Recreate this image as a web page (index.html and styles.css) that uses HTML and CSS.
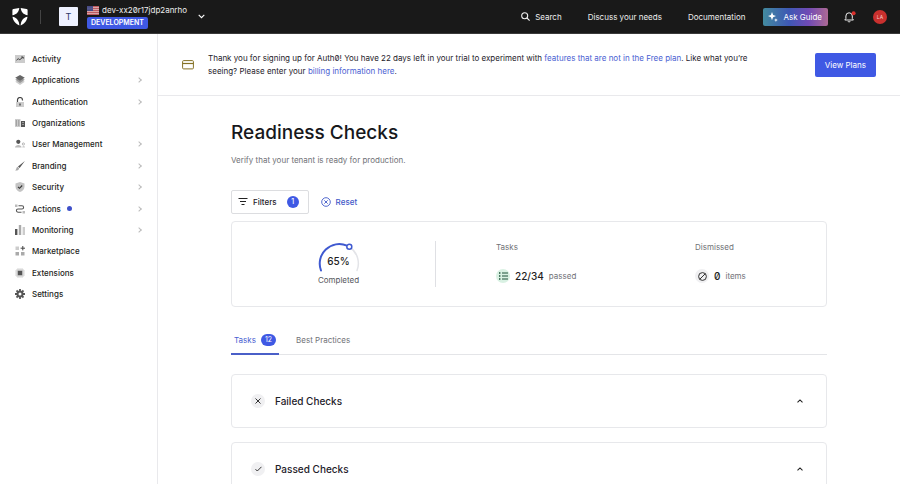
FILE: index.html
```html
<!DOCTYPE html>
<html lang="en">
<head>
<meta charset="utf-8">
<meta name="viewport" content="width=device-width, initial-scale=1">
<title>Readiness Checks</title>
<link rel="stylesheet" href="styles.css">
</head>
<body>
<header class="topbar">
  <a class="logo" href="#" aria-label="Home">
    <svg width="16" height="18" viewBox="0 0 16 18" fill="#fff"><path d="M7.3 0C7 3.600 4.600 6.600.4 7.300V2.200C.4 1.600.8 1.200 1.400 1.100Z"/><path d="M8.700 0C9 3.600 11.400 6.600 15.600 7.300V2.200C15.600 1.600 15.200 1.200 14.600 1.100Z"/><path d="M.5 8.700C4.600 9.300 7 12.400 7.400 17.500 3.600 15.800.9 12.600.5 8.700Z"/><path d="M15.500 8.700C11.400 9.300 9 12.400 8.600 17.500 12.400 15.800 15.100 12.600 15.500 8.700Z"/></svg>
  </a>
  <span class="divider"></span>
  <button class="tenant" type="button">
    <span class="tenant-tile">T</span>
    <span class="tenant-info">
      <span class="tenant-name">
        <svg width="12" height="9" viewBox="0 0 12 9"><path fill="#d9a5a8" d="M0 0h12v9H0z"/><path stroke="#bd5a60" d="M0 .5h12M0 2.500h12M0 4.500h12M0 6.500h12M0 8.500h12"/><path fill="#41457f" d="M0 0h6v5H0z"/><path stroke="#8f93bd" stroke-dasharray="1 1" stroke-width=".5" d="M.5 1.200h5M.5 2.500h5M.5 3.800h5"/></svg>
        dev-xx20r17jdp2anrho
      </span>
      <span class="env">DEVELOPMENT</span>
    </span>
    <svg width="7" height="5" viewBox="0 0 7 5" fill="none" stroke="#fff" stroke-width="1.100"><path d="M.7.800 3.500 3.600 6.300.8"/></svg>
  </button>
  <nav class="toplinks" aria-label="Tools">
    <a href="#"><svg width="9" height="9" viewBox="0 0 9 9" fill="none" stroke="#eee" stroke-width="1.100"><circle cx="3.700" cy="3.700" r="3"/><path d="m6 6 2.600 2.600"/></svg>Search</a>
    <a href="#">Discuss your needs</a>
    <a href="#">Documentation</a>
  </nav>
  <button class="guide" type="button"><svg width="10" height="10" viewBox="0 0 10 10" fill="#fff"><path d="M4 0 5.100 3 8 4.100 5.100 5.200 4 8.200 2.900 5.200 0 4.100 2.900 3ZM7.900 6.200l.6 1.300 1.300.6-1.300.5-.6 1.400-.5-1.400L6 8.100l1.400-.6Z"/></svg>Ask Guide</button>
  <button class="bell" type="button" aria-label="Notifications"><svg width="13" height="12" viewBox="0 0 13 12" fill="none"><path stroke="#eee" stroke-linejoin="round" d="M.8 9h8.600L8.300 7.500V5A3.200 3.200 0 0 0 1.900 5v2.500Z"/><path stroke="#eee" d="M3.800 10.200c.3.900 2.300.9 2.600 0"/><circle cx="9.600" cy="2.200" r="2" fill="#d9302c"/></svg></button>
  <button class="avatar" type="button">LA</button>
</header>
<div class="shell">
  <nav class="sidebar" aria-label="Main">
    <ul>
      <li><a href="#"><svg viewBox="0 0 10 10" fill="none"><path fill="#ccc" d="M0 1h10v8H0z"/><path stroke="#444" d="m1.500 6.200 1.700-1.500 1.600 1 3-2.500M6.200 3h2v1.700"/></svg>Activity</a></li>
      <li><a href="#"><svg viewBox="0 0 10 10"><path fill="#ccc" d="m5 4.200 4.800 2.500L5 10 .2 6.700Z"/><path fill="#999" d="m5 2.400 4.800 2.400L5 8 .2 4.800Z"/><path fill="#666" d="m5 0 4.800 2.800L5 5.800.2 2.800Z"/></svg>Applications<i class="more"></i></a></li>
      <li><a href="#"><svg viewBox="0 0 10 10" fill="none"><path fill="#ccc" d="M1 5h8v5H1z"/><path stroke="#444" stroke-width="1.200" d="M2.500 5V3a2.500 2.500 0 0 1 5 0v.6"/><path fill="#333" d="M4.400 6.500h1.200v2H4.400z"/></svg>Authentication<i class="more"></i></a></li>
      <li><a href="#"><svg viewBox="0 0 10 10"><path fill="#ccc" d="M0 1h5.500v8H0z"/><path fill="#555" d="M6 3h4v6H6z"/><path stroke="#666" stroke-dasharray="1 1" d="M1.300 2.500v5M3.800 2.500v5"/><path stroke="#ddd" stroke-dasharray="1 1" d="M8 4v4"/></svg>Organizations</a></li>
      <li><a href="#"><svg viewBox="0 0 10 10"><circle cx="3.300" cy="2.800" r="2.100" fill="#555"/><path fill="#bbb" d="M0 8.500C0 5 6.600 5 6.600 8.500Z"/><circle cx="8.400" cy="5" r="1.100" fill="none" stroke="#999" stroke-width=".7"/><path fill="#ccc" d="M7.200 8.500c0-2 2.800-2 2.800 0Z"/></svg>User Management<i class="more"></i></a></li>
      <li><a href="#"><svg viewBox="0 0 10 10"><path fill="#555" d="M9.900.1 4.600 7 3 5.400Z"/><path fill="#aaa" d="M2.600 5.800 4.200 7.400C3.600 9.500 1.500 9.700.1 9.500 1.500 8.700.9 6.700 2.600 5.800Z"/></svg>Branding<i class="more"></i></a></li>
      <li><a href="#"><svg viewBox="0 0 10 10" fill="none"><path fill="#c4c4c4" d="m5 0 4.500 1.500v3C9.500 7.300 7.500 9.200 5 10 2.500 9.200.5 7.300.5 4.500v-3Z"/><path stroke="#333" stroke-width="1.100" d="m3 4.800 1.500 1.500L7.200 3.500"/></svg>Security<i class="more"></i></a></li>
      <li><a href="#"><svg viewBox="0 0 10 10" fill="none"><path fill="#bbb" d="M0 .5h2.500V3H0zM7.500 7H10v2.500H7.500z"/><path stroke="#555" stroke-width="1.100" d="M3.500 1.800H7a1.600 1.600 0 0 1 0 3.200H3a1.600 1.600 0 0 0 0 3.200h3.500"/></svg>Actions<b class="dot"></b><i class="more"></i></a></li>
      <li><a href="#"><svg viewBox="0 0 10 10"><path fill="#555" d="M0 4h2.400v6H0z"/><path fill="#aaa" d="M3.800 0h2.400v10H3.800z"/><path fill="#ccc" d="M7.600 2H10v8H7.600z"/></svg>Monitoring<i class="more"></i></a></li>
      <li><a href="#"><svg viewBox="0 0 10 10"><path fill="#ccc" d="M.5.500h3.500V4H.5z"/><path fill="#aaa" d="M.5 6H4v3.500H.5zM6 6h3.500v3.500H6z"/><path stroke="#444" d="M7.800 0v4.400M5.600 2.200H10"/></svg>Marketplace</a></li>
      <li><a href="#"><svg viewBox="0 0 10 10"><path fill="#ddd" d="M1.200 1.200h7.600v7.600H1.200z"/><path stroke="#ccc" stroke-width=".8" d="M3 0v10M5 0v10M7 0v10M0 3h10M0 5h10M0 7h10"/><path fill="#555" d="M2.800 2.800h4.400v4.400H2.800z"/></svg>Extensions</a></li>
      <li><a href="#"><svg viewBox="0 0 10 10" fill="none" stroke="#555"><circle cx="5" cy="5" r="2.500" stroke-width="2"/><path stroke-width="1.800" d="M5 0v2M5 8v2M0 5h2M8 5h2M1.500 1.500l1.400 1.400M7.100 7.100l1.400 1.400M1.500 8.500l1.400-1.400M7.100 2.900l1.400-1.400"/></svg>Settings</a></li>
    </ul>
  </nav>
  <div class="page">
    <aside class="banner">
      <svg width="12" height="10" viewBox="0 0 12 10" fill="none" stroke="#857126"><rect x=".6" y=".6" width="10.800" height="8.300" rx="1"/><path stroke-width="1.200" d="M.6 3.500h10.800"/></svg>
      <p>Thank you for signing up for Auth0! You have 22 days left in your trial to experiment with <a href="#">features that are not in the Free plan</a>. Like what you’re seeing? Please enter your <a href="#">billing information here</a>.</p>
      <button class="plans" type="button">View Plans</button>
    </aside>
    <main class="content">
      <h1>Readiness Checks</h1>
      <p class="lead">Verify that your tenant is ready for production.</p>
      <div class="toolbar">
        <button class="filters" type="button"><svg width="10" height="8" viewBox="0 0 10 8" stroke="#222"><path d="M.5.500h9M2 3.500h6M3.500 6.500h3"/></svg>Filters<span class="count">1</span></button>
        <button class="reset" type="button"><svg width="10" height="10" viewBox="0 0 10 10" fill="none" stroke="#3f59c8" stroke-width=".9"><circle cx="5" cy="5" r="4.300"/><path d="m3.300 3.300 3.400 3.400M6.700 3.300 3.300 6.700"/></svg>Reset</button>
      </div>
      <section class="summary">
        <div class="progress">
          <div class="gauge">
            <svg width="42" height="31" viewBox="0 0 42 31" fill="none" stroke-linecap="round"><path stroke="#e3e4e8" stroke-width="1.500" d="M31.500 5A19.500 19.500 0 0 1 39 28.500"/><path stroke="#3f59d0" stroke-width="2" d="M3 28.500A19.500 19.500 0 0 1 29 3.700"/><circle cx="31.300" cy="4.800" r="2.500" fill="#fff" stroke="#3f59d0" stroke-width="1.500"/></svg>
            <strong>65%</strong>
          </div>
          <span>Completed</span>
        </div>
        <div class="stat">
          <h2>Tasks</h2>
          <p><span class="badge green"><svg width="9" height="8" viewBox="0 0 9 8" stroke="#1d5138"><path stroke-width="1.300" d="M0 1h1.400M0 4h1.400M0 7h1.400"/><path d="M3 1h6M3 4h6M3 7h6"/></svg></span><strong>22/34</strong>passed</p>
        </div>
        <div class="stat">
          <h2>Dismissed</h2>
          <p><span class="badge"><svg width="9" height="9" viewBox="0 0 9 9" fill="none" stroke="#333"><circle cx="4.500" cy="4.500" r="3.900"/><path d="m1.800 7.200 5.400-5.400"/></svg></span><strong>0</strong>items</p>
        </div>
      </section>
      <div class="tabs" role="tablist">
        <button class="tab active" type="button" role="tab" aria-selected="true">Tasks<span class="count">12</span></button>
        <button class="tab" type="button" role="tab" aria-selected="false">Best Practices</button>
      </div>
      <button class="check" type="button"><span class="badge"><svg width="6" height="6" viewBox="0 0 6 6" stroke="#333"><path d="m.5.500 5 5M5.500.500l-5 5"/></svg></span>Failed Checks<svg class="caret" width="6" height="4" viewBox="0 0 6 4" fill="none" stroke="#222" stroke-width="1.100"><path d="M.5 3.300 3 .900l2.500 2.400"/></svg></button>
      <button class="check" type="button"><span class="badge"><svg width="7" height="6" viewBox="0 0 7 6" fill="none" stroke="#333"><path d="m.5 3.200 1.800 1.800L6.500.800"/></svg></span>Passed Checks<svg class="caret" width="6" height="4" viewBox="0 0 6 4" fill="none" stroke="#222" stroke-width="1.100"><path d="M.5 3.300 3 .900l2.500 2.400"/></svg></button>
    </main>
  </div>
</div>
</body>
</html>
```
FILE: styles.css
```css
* { box-sizing: border-box; }
body {
  margin: 0;
  height: 100vh;
  overflow: hidden;
  display: flex;
  flex-direction: column;
  background: #fff;
  color: #1e212a;
  font: 8px/14px Inter, "Liberation Sans", sans-serif;
  font-feature-settings: "zero";
}
h1, h2, p, ul { margin: 0; padding: 0; font-weight: 400; }
button { font: inherit; font-feature-settings: inherit; color: inherit; background: none; border: 0; padding: 0; cursor: pointer; }
a { color: #4a61d2; text-decoration: none; }
svg { flex: none; display: block; }

.topbar {
  flex: none;
  display: flex;
  align-items: center;
  height: 34px;
  padding: 0 13px 0 12px;
  background: #191919;
  border-bottom: 1px solid #3a3a3a;
  color: #eee;
}
.divider { width: 1px; height: 14px; margin: 0 18px 0 12px; background: #444; }
.tenant { display: flex; align-items: center; }
.tenant-tile {
  width: 19px;
  line-height: 19px;
  margin-right: 9px;
  border-radius: 1px;
  background: #eef1ff;
  color: #2d3768;
  font-size: 9px;
}
.tenant-info { display: flex; flex-direction: column; align-items: flex-start; margin-right: 11px; }
.tenant-name { display: flex; align-items: center; gap: 3px; line-height: 13px; }
.env {
  padding: 0 4px;
  border-radius: 2px;
  background: #3f59e4;
  color: #fff;
  font-size: 7px;
  font-weight: 600;
  line-height: 12px;
}
.toplinks { display: flex; gap: 26px; margin-left: auto; }
.toplinks a { display: flex; align-items: center; gap: 5px; color: #eee; }
.guide {
  display: flex;
  align-items: center;
  gap: 5px;
  height: 18px;
  margin-left: 18px;
  padding: 0 6px 0 5px;
  border-radius: 2px;
  background: linear-gradient(90deg, #438b9f, #3e58b4 40%, #704ab5 70%, #ad6994);
  color: #fff;
}
.bell { margin-left: 16px; }
.avatar {
  width: 14px;
  height: 14px;
  margin-left: 16px;
  border-radius: 50%;
  background: #c9302e;
  color: #f8caca;
  font-size: 5px;
  line-height: 14px;
}

.shell { flex: 1; display: flex; min-height: 0; }
.sidebar { flex: none; width: 158px; padding: 14px 16px 14px 15px; border-right: 1px solid #e9e9ec; }
.sidebar ul { display: grid; grid-auto-rows: 1fr; min-height: 257px; list-style: none; }
.sidebar li { display: grid; }
.sidebar a { display: flex; align-items: center; color: #1e1e22; font-weight: 500; }
.sidebar svg { width: 10px; height: 10px; margin-right: 7px; }
.dot { width: 5px; height: 5px; margin-left: 6px; border-radius: 50%; background: #3f50c9; }
.more {
  width: 4px;
  height: 4px;
  margin-left: auto;
  border: solid #bbb;
  border-width: 1px 1px 0 0;
  transform: rotate(45deg);
}

.page { flex: 1; min-width: 0; }
.banner {
  display: flex;
  align-items: center;
  min-height: 62px;
  padding: 0 24px;
  border-bottom: 1px solid #e9e9ec;
}
.banner p { flex: 1; max-width: 560px; margin: 0 auto 0 14px; line-height: 13px; }
.plans {
  height: 24px;
  padding: 0 10px;
  border-radius: 2px;
  background: #3f59e4;
  color: #fff;
}

.content { max-width: 596px; margin: 0 auto; padding-top: 25px; }
h1 { font-size: 19px; line-height: 24px; font-weight: 500; color: #17181c; }
.lead { margin-top: 8px; color: #717277; }
.toolbar { display: flex; align-items: center; gap: 12px; margin-top: 23px; }
.filters {
  display: flex;
  align-items: center;
  gap: 5px;
  height: 24px;
  padding: 0 9px 0 6px;
  border: 1px solid #dcdde0;
  border-radius: 2px;
  font-weight: 500;
}
.count {
  min-width: 12px;
  padding: 0 4px;
  border-radius: 6px;
  background: #3f59e4;
  color: #fff;
  font-size: 7px;
  line-height: 12px;
}
.filters .count { margin-left: 5px; }
.reset { display: flex; align-items: center; gap: 5px; color: #3f59c8; font-weight: 500; }
.summary {
  display: grid;
  grid-template-columns: 204px 1fr 191px;
  align-items: center;
  min-height: 86px;
  margin-top: 7px;
  border: 1px solid #e7e8eb;
  border-radius: 4px;
}
.progress {
  height: 46px;
  display: flex;
  flex-direction: column;
  align-items: center;
  justify-content: center;
  border-right: 1px solid #dfe0e4;
  padding: 1px 0 0 10px;
  color: #55565c;
}
.gauge { display: grid; justify-items: center; align-items: end; }
.gauge > * { grid-area: 1 / 1; }
.gauge strong { margin-bottom: 5px; }
.summary strong { font-size: 10px; font-weight: 500; color: #1e1e22; }
.stat { padding: 0 0 5px 60px; color: #717277; }
.stat h2 { font-size: 8px; }
.stat p { display: flex; align-items: center; gap: 5px; margin-top: 15px; }
.badge {
  display: grid;
  place-items: center;
  width: 14px;
  height: 14px;
  border-radius: 50%;
  background: #f0f0f2;
}
.green { background: #d9f1e3; }
.tabs { display: flex; gap: 14px; margin: 20px 0 19px; border-bottom: 1px solid #e4e5e8; }
.tab {
  display: flex;
  align-items: center;
  gap: 5px;
  height: 28px;
  margin-bottom: -1px;
  padding: 0 3px;
  border-bottom: 2px solid transparent;
  color: #717277;
}
.tab.active { border-color: #4a5fc8; color: #4a61d2; }
.check {
  display: flex;
  align-items: center;
  gap: 10px;
  width: 100%;
  height: 54px;
  margin-bottom: 14px;
  padding: 0 23px 0 19px;
  border: 1px solid #e7e8eb;
  border-radius: 4px;
  font-size: 10px;
  font-weight: 500;
}
.caret { margin-left: auto; }
```
